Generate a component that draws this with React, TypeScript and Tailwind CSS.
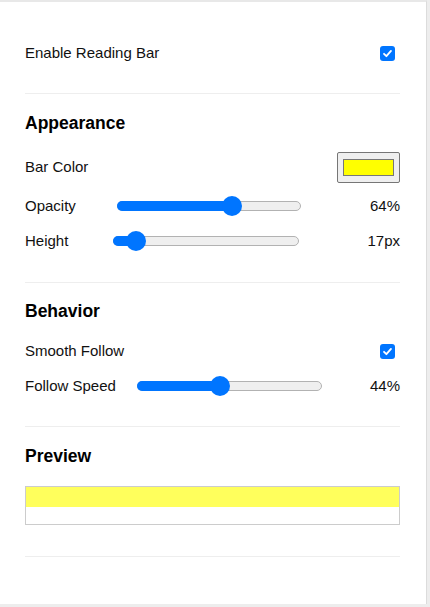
const BLUE = "#0075ff";

function Checkbox() {
  return (
    <div className="mr-[5px] flex h-[15px] w-[15px] items-center justify-center rounded-[3px] bg-[#0075ff]">
      <svg viewBox="0 0 12 12" className="h-[11px] w-[11px]" fill="none">
        <path d="M2.2 6.3 L4.8 8.9 L9.8 3.2" stroke="white" strokeWidth="2" strokeLinecap="round" strokeLinejoin="round" />
      </svg>
    </div>
  );
}

function Slider({ width, value }: { width: number; value: number }) {
  const r = 10;
  const pos = r + (width - 2 * r) * value;
  return (
    <div className="relative h-[20px]" style={{ width }}>
      <div className="absolute left-0 right-0 top-[5px] h-[10px] rounded-full border border-[#b2b2b2] bg-[#efefef]" />
      <div className="absolute left-0 top-[5px] h-[10px] rounded-full" style={{ width: pos, backgroundColor: BLUE }} />
      <div className="absolute top-0 h-[20px] w-[20px] rounded-full" style={{ left: pos - r, backgroundColor: BLUE }} />
    </div>
  );
}

function SliderRow({ label, labelW, width, value, text }: { label: string; labelW: string; width: number; value: number; text: string }) {
  return (
    <div className="flex h-[20px] items-center">
      <span className={labelW}>{label}</span>
      <Slider width={width} value={value} />
      <span className="flex-1 text-right">{text}</span>
    </div>
  );
}

function Divider() {
  return <div className="h-px bg-[#eeeeee]" />;
}

export default function App() {
  return (
    <div className="h-[607px] w-[430px] overflow-hidden bg-[#ededed] font-['Liberation_Sans',Arial,sans-serif] text-[15px] text-[#111]">
      <div className="h-[604px] w-[427px] border-t-2 border-r border-t-[#e8e8e8] border-r-[#dcdcdc] bg-white pl-[25px] pr-[26px]">
        <div className="mt-[41px] flex h-[20px] items-center justify-between">
          <span>Enable Reading Bar</span>
          <Checkbox />
        </div>
        <div className="mt-[30px]">
          <Divider />
        </div>

        {/* Appearance */}
        <h3 className="mt-[19px] flex h-[20px] items-center text-[17.5px] font-bold text-black">Appearance</h3>
        <div className="mt-[19px] flex h-[31px] items-center justify-between">
          <span>Bar Color</span>
          <div className="h-[31px] w-[63px] rounded-[2px] border border-[#767676] bg-[#efefef] pl-[5px] pt-[6px]">
            <div className="h-[17px] w-[51px] border border-[#777777] bg-[#ffff00]" />
          </div>
        </div>
        <div className="mt-[13px]">
          <SliderRow label="Opacity" labelW="w-[92px]" width={184} value={0.64} text="64%" />
        </div>
        <div className="mt-[15px]">
          <SliderRow label="Height" labelW="w-[88px]" width={186} value={7 / 90} text="17px" />
        </div>
        <div className="mt-[31px]">
          <Divider />
        </div>

        {/* Behavior */}
        <h3 className="mt-[18px] flex h-[20px] items-center text-[17.5px] font-bold text-black">Behavior</h3>
        <div className="mt-[20px] flex h-[20px] items-center justify-between">
          <span>Smooth Follow</span>
          <Checkbox />
        </div>
        <div className="mt-[15px]">
          <SliderRow label="Follow Speed" labelW="w-[112px]" width={185} value={0.44} text="44%" />
        </div>
        <div className="mt-[30px]">
          <Divider />
        </div>

        {/* Preview */}
        <h3 className="mt-[19px] flex h-[20px] items-center text-[17.5px] font-bold text-black">Preview</h3>
        <div className="mt-[20px] h-[39px] border border-[#cccccc] bg-white">
          <div className="h-[20px] bg-[#ffff00] opacity-[0.64]" />
        </div>
        <div className="mt-[31px]">
          <Divider />
        </div>
      </div>
    </div>
  );
}
